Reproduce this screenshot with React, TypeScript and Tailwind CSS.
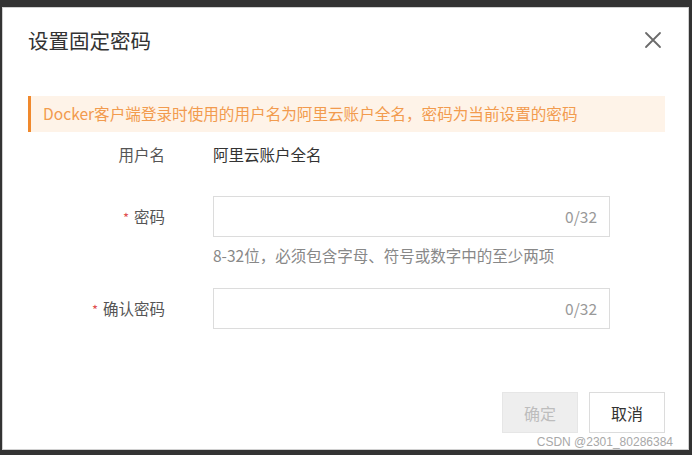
import React from "react";

const font = { fontFamily: '"Noto Sans CJK SC", "Noto Sans", sans-serif' };

export default function App() {
  return (
    <div className="w-[692px] h-[455px] bg-[#333333] pt-[7px] pl-[2px] pr-[3px] pb-[5px]" style={font}>
      <div className="relative h-full w-full bg-white border border-[#d0d0d0] pl-[25px] pr-[23px] pt-[20px] flex flex-col">
        <div className="flex items-center justify-between h-[24px]">
          <span className="text-[20.5px] leading-[24px] text-[#333]">设置固定密码</span>
          <svg width="18" height="18" viewBox="0 0 18 18" className="mr-[3px]">
            <path d="M2 2 L16 16 M16 2 L2 16" stroke="#6b6b6b" strokeWidth="1.8" strokeLinecap="round" />
          </svg>
        </div>
        <div className="mt-[44px] h-[36px] flex items-center bg-[#fef3e8] border-l-[3px] border-[#f0892d] pl-[12px] text-[15.6px] text-[#f29b4e] whitespace-nowrap">
          Docker客户端登录时使用的用户名为阿里云账户全名，密码为当前设置的密码
        </div>
        <div className="mt-[13px] flex items-center h-[20px] text-[15.5px] text-[#333]">
          <div className="w-[137px] text-right text-[#555]">用户名</div>
          <div className="ml-[48px]">阿里云账户全名</div>
        </div>
        <div className="mt-[31px] flex items-center text-[15.5px]">
          <div className="w-[137px] text-right text-[#555]">
            <span className="text-[#e05050] text-[13px] mr-[5px]">*</span>密码
          </div>
          <div className="ml-[48px] w-[397px] h-[41px] border border-[#dcdcdc] flex items-center justify-end pr-[12px] text-[#999]">
            0/32
          </div>
        </div>
        <div className="mt-[8px] ml-[185px] text-[15.5px] leading-[20px] text-[#888] whitespace-nowrap">
          8-32位，必须包含字母、符号或数字中的至少两项
        </div>
        <div className="mt-[23px] flex items-center text-[15.5px]">
          <div className="w-[137px] text-right text-[#555]">
            <span className="text-[#e05050] text-[13px] mr-[5px]">*</span>确认密码
          </div>
          <div className="ml-[48px] w-[397px] h-[41px] border border-[#dcdcdc] flex items-center justify-end pr-[12px] text-[#999]">
            0/32
          </div>
        </div>
        <div className="mt-[63px] flex justify-end gap-[11px] text-[16px]">
          <div className="w-[76px] h-[41px] bg-[#eeeeee] border border-[#e6e6e6] flex items-center justify-center text-[#bdbdbd]">
            确定
          </div>
          <div className="w-[76px] h-[41px] bg-white border border-[#dcdcdc] flex items-center justify-center text-[#333]">
            取消
          </div>
        </div>
        <div
          className="absolute right-[15px] bottom-[0px] text-[12px] leading-[14px] text-[#a8a8a8]"
          style={{ fontFamily: '"Liberation Sans", sans-serif' }}
        >
          CSDN @2301_80286384
        </div>
      </div>
    </div>
  );
}
